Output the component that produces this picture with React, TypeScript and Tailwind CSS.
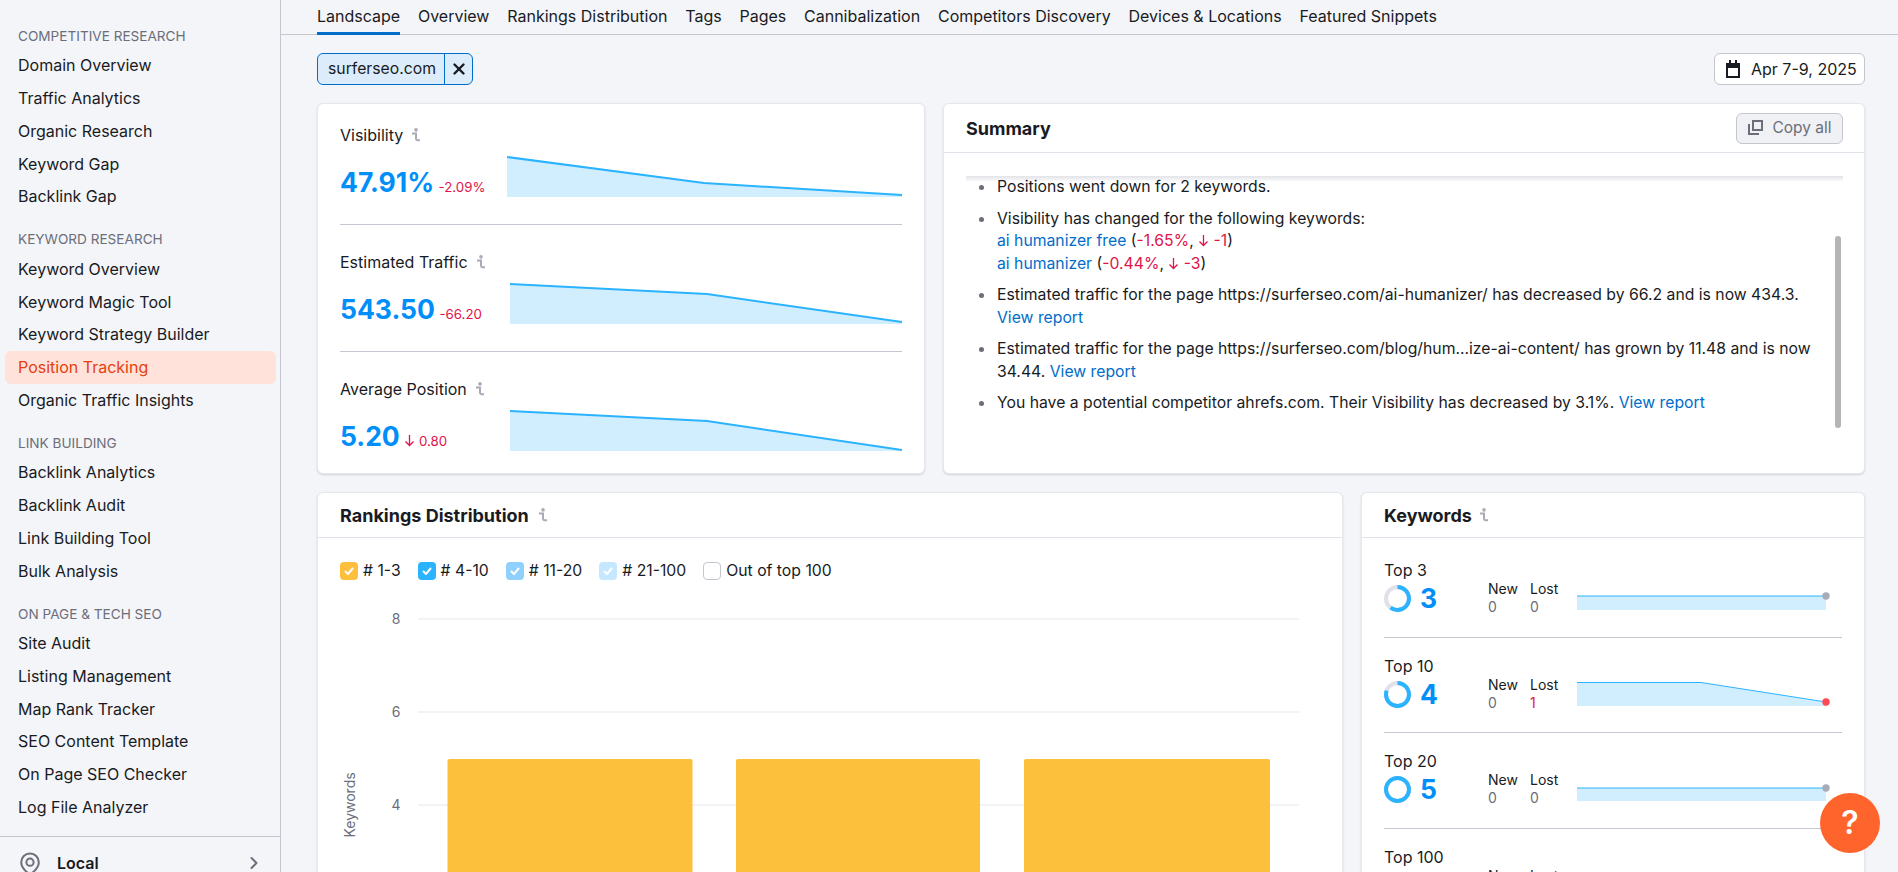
import { ChevronRight, X } from "lucide-react";

const sections = [
  {
    title: "COMPETITIVE RESEARCH",
    items: ["Domain Overview", "Traffic Analytics", "Organic Research", "Keyword Gap", "Backlink Gap"],
  },
  {
    title: "KEYWORD RESEARCH",
    items: ["Keyword Overview", "Keyword Magic Tool", "Keyword Strategy Builder", "Position Tracking", "Organic Traffic Insights"],
  },
  {
    title: "LINK BUILDING",
    items: ["Backlink Analytics", "Backlink Audit", "Link Building Tool", "Bulk Analysis"],
  },
  {
    title: "ON PAGE & TECH SEO",
    items: ["Site Audit", "Listing Management", "Map Rank Tracker", "SEO Content Template", "On Page SEO Checker", "Log File Analyzer"],
  },
];

const tabs = ["Landscape", "Overview", "Rankings Distribution", "Tags", "Pages", "Cannibalization", "Competitors Discovery", "Devices & Locations", "Featured Snippets"];

const legend = [
  { label: "# 1-3", color: "bg-[#fdbf3c]", check: true },
  { label: "# 4-10", color: "bg-[#2bb3ff]", check: true },
  { label: "# 11-20", color: "bg-[#8fd0ff]", check: true },
  { label: "# 21-100", color: "bg-[#c5e7ff]", check: true },
  { label: "Out of top 100", color: "bg-white border border-[#c4c7cf]", check: false },
];

function InfoIcon() {
  return (
    <svg width="9" height="14" viewBox="0 0 9 14" className="shrink-0 text-[#a9abb6]">
      <circle cx="5" cy="1.9" r="1.8" fill="currentColor" />
      <path d="M1 5.6h4v5.2c0 .9.5 1.4 1.4 1.4H9" fill="none" stroke="currentColor" strokeWidth="2" />
    </svg>
  );
}

function Sparkline({ w, mid, end }: { w: number; mid: number; end: number }) {
  const midX = 197;
  return (
    <svg width={w} height="41" viewBox={`0 0 ${w} 41`} className="block shrink-0">
      <path d={`M0 1 L${midX} ${mid} L${w} ${end} L${w} 41 L0 41 Z`} fill="#d1eeff" />
      <path d={`M0 1 L${midX} ${mid} L${w} ${end}`} fill="none" stroke="#2bb3ff" strokeWidth="2" />
    </svg>
  );
}

function Metric({ label, value, delta, chartW, mid, end }: { label: string; value: string; delta: React.ReactNode; chartW: number; mid: number; end: number }) {
  return (
    <div className="pt-[26px] pb-[27px] border-b border-[#c4c7cf] first:pt-[20px] last:border-b-0">
      <div className="flex h-[22px] items-center gap-[8px] text-[16px] text-[#191b23]">
        {label}
        <InfoIcon />
      </div>
      <div className="mt-[10px] flex items-end justify-between">
        <div className="-mb-px flex items-baseline gap-[4.5px]">
          <span className="text-[26.5px] leading-[32px] font-bold text-[#008ff8]">{value}</span>
          <span className="text-[13.3px] text-[#e0134b]">{delta}</span>
        </div>
        <Sparkline w={chartW} mid={mid} end={end} />
      </div>
    </div>
  );
}

function Donut({ pct }: { pct: number }) {
  const c = 2 * Math.PI * 11.5;
  return (
    <svg width="27" height="27" viewBox="0 0 27 27" className="block">
      <circle cx="13.5" cy="13.5" r="11.5" fill="none" stroke="#e0e1e9" strokeWidth="4" />
      <circle
        cx="13.5"
        cy="13.5"
        r="11.5"
        fill="none"
        stroke="#2bb3ff"
        strokeWidth="4"
        strokeDasharray={`${c * pct} ${c}`}
        transform="rotate(-90 13.5 13.5)"
      />
    </svg>
  );
}

function KeywordChart({ line, mid, end, dot }: { line: number; mid?: boolean; end: number; dot: string }) {
  const path = mid ? `M0 ${line} L124 ${line} L249 ${end}` : `M0 ${line} L249 ${end}`;
  return (
    <svg width="256" height="32" viewBox="0 0 256 32" className="block">
      <path d={`${path} L249 30 L0 30 Z`} fill="#d1eeff" />
      <path d={path} fill="none" stroke="#2bb3ff" strokeWidth="1" />
      <circle cx="249" cy={end} r="3.7" fill={dot} />
    </svg>
  );
}

function KeywordRow({ label, value, pct, lost, line, mid, end, dot }: { label: string; value: string; pct: number; lost: string; line: number; mid?: boolean; end: number; dot: string }) {
  return (
    <div className="flex border-b border-[#c4c7cf] pt-[17px] pb-[20.5px] first:pt-[21px] last:border-b-0">
      <div className="w-[104px] shrink-0">
        <div className="h-[22px] text-[16px] leading-[22px] text-[#191b23]">{label}</div>
        <div className="mt-[4px] flex h-[27px] items-center gap-[9px]">
          <Donut pct={pct} />
          <span className="text-[26.5px] leading-[27px] font-bold text-[#008ff8]">{value}</span>
        </div>
      </div>
      <div className="mt-[21px] w-[42px] shrink-0 text-[14px] leading-[18px]">
        <div className="text-[#191b23]">New</div>
        <div className="text-[#6c6e79]">0</div>
      </div>
      <div className="mt-[21px] w-[47px] shrink-0 text-[14px] leading-[18px]">
        <div className="text-[#191b23]">Lost</div>
        <div className={lost === "0" ? "text-[#6c6e79]" : "text-[#e0134b]"}>{lost}</div>
      </div>
      <div className="mt-[21px]">
        <KeywordChart line={line} mid={mid} end={end} dot={dot} />
      </div>
    </div>
  );
}

function Card({ className, children }: { className?: string; children: React.ReactNode }) {
  return <div className={`rounded-[6px] border border-[#e6e7ed] bg-white shadow-[0_1px_2px_rgba(25,27,35,0.15)] ${className}`}>{children}</div>;
}

function Arrow() {
  return (
    <svg width="11" height="13" viewBox="0 0 11 13" className="inline-block align-[-1px]">
      <path d="M5.5 1v10.5M1.5 7.5l4 4 4-4" fill="none" stroke="#e0134b" strokeWidth="1.3" />
    </svg>
  );
}

function SummaryItem({ children }: { children: React.ReactNode }) {
  return (
    <li className="flex pl-[13px] mb-[9.3px]">
      <span className="mt-[9px] mr-[13px] h-[5px] w-[5px] shrink-0 rounded-full bg-[#6c6e79]" />
      <div className="w-[823px]">{children}</div>
    </li>
  );
}

function Link({ children }: { children: React.ReactNode }) {
  return <span className="text-[#006dca]">{children}</span>;
}

function Red({ children }: { children: React.ReactNode }) {
  return <span className="text-[#e0134b]">{children}</span>;
}

export default function App() {
  return (
    <div className="relative flex h-[872px] w-[1898px] overflow-hidden bg-[#f4f5f9] font-['Inter',sans-serif] text-[#191b23]">
      {/* Sidebar */}
      <aside className="flex w-[281px] shrink-0 flex-col border-r border-[#c4c7cf] pt-[23px]">
        {sections.map((s) => (
          <div key={s.title} className="mb-[13.75px] shrink-0">
            <div className="flex h-[26px] items-center pl-[18px] text-[13.6px] text-[#6c6e79]">{s.title}</div>
            {s.items.map((item) => (
              <div
                key={item}
                className={`ml-[5px] mr-[4px] flex h-[32.75px] items-center rounded-[6px] pl-[13px] text-[16px] ${
                  item === "Position Tracking" ? "bg-[#ffe2d9] text-[#e5400e]" : "text-[#191b23]"
                }`}
              >
                {item}
              </div>
            ))}
          </div>
        ))}
        <div className="-mt-px flex h-[52px] shrink-0 items-center border-t border-[#c4c7cf] pl-[20px] pr-[16px]">
          <svg width="20" height="24" viewBox="0 0 20 24" className="mt-[3px] mr-[17px]">
            <path d="M10 22.5C5 19 1.2 15.2 1.2 10.2a8.8 8.8 0 0 1 17.6 0c0 5-3.8 8.8-8.8 12.3Z" fill="none" stroke="#6c6e79" strokeWidth="2" />
            <circle cx="10" cy="10.2" r="3.6" fill="none" stroke="#6c6e79" strokeWidth="2" />
          </svg>
          <span className="flex-1 text-[16px] font-semibold">Local</span>
          <ChevronRight size={20} strokeWidth={2.4} className="text-[#6c6e79]" />
        </div>
      </aside>

      {/* Main */}
      <main className="min-w-0 flex-1">
        <nav className="flex h-[35px] gap-[17.8px] border-b border-[#c4c7cf] pl-[36px]">
          {tabs.map((t, i) => (
            <div key={t} className={`flex h-[35px] items-center pb-[3px] text-[16px] ${i === 0 ? "border-b-[3px] border-[#006dca] pt-[3px]" : ""}`}>
              {t}
            </div>
          ))}
        </nav>

        <div className="pl-[36px] pr-[33px]">
          <div className="mt-[18px] flex h-[32px] items-center justify-between">
            <div className="flex h-[32px] items-center rounded-[6px] border border-[#006dca] bg-[#dcecfb] text-[15.75px]">
              <span className="flex h-full w-[127px] items-center border-r border-[#006dca] pl-[10px]">surferseo.com</span>
              <span className="flex w-[27px] items-center justify-center">
                <X size={18} strokeWidth={3.2} />
              </span>
            </div>
            <div className="flex h-[32px] w-[151px] items-center gap-[10px] rounded-[6px] border border-[#c4c7cf] bg-white pl-[10px] text-[16px]">
              <svg width="16" height="18" viewBox="0 0 16 18">
                <path d="M4 0h2v3h4V0h2v3h3v15H1V3h3V0Zm-1 8v8h10V8H3Z" fill="#191b23" />
              </svg>
              Apr 7-9, 2025
            </div>
          </div>

          <div className="mt-[18px] flex gap-[18px]">
            <Card className="h-[371px] w-[608px] px-[22px]">
              <Metric label="Visibility" value="47.91%" delta="-2.09%" chartW={395} mid={27} end={39} />
              <Metric label="Estimated Traffic" value="543.50" delta="-66.20" chartW={392} mid={11} end={39} />
              <Metric
                label="Average Position"
                value="5.20"
                delta={
                  <>
                    <Arrow /> 0.80
                  </>
                }
                chartW={392}
                mid={11}
                end={40}
              />
            </Card>

            <Card className="relative h-[371px] w-[922px]">
              <div className="flex h-[49px] items-center justify-between border-b border-[#e0e1e9] pl-[22px] pr-[21px]">
                <span className="text-[18px] font-bold">Summary</span>
                <div className="flex h-[31px] w-[107px] items-center justify-center gap-[8px] rounded-[6px] border border-[#c4c7cf] bg-[#f0f1f5] pb-px text-[15.5px] text-[#6c6e79]">
                  <svg width="17" height="17" viewBox="0 0 17 17">
                    <path d="M5 1h11v11H5V1Zm2 2v7h7V3H7ZM1 5h2v9h9v2H1V5Z" fill="#6c6e79" />
                  </svg>
                  Copy all
                </div>
              </div>
              <div className="absolute left-[22px] right-[21px] top-[72px] h-[6px] bg-gradient-to-b from-[#e2e3e8] to-white" />
              <ul className="relative pl-[22px] pt-[23px] text-[15.75px] leading-[22.4px]">
                <SummaryItem>Positions went down for 2 keywords.</SummaryItem>
                <SummaryItem>
                  Visibility has changed for the following keywords:
                  <br />
                  <Link>ai humanizer free</Link> (<Red>-1.65%</Red>, <Arrow /> <Red>-1</Red>)
                  <br />
                  <Link>ai humanizer</Link> (<Red>-0.44%</Red>, <Arrow /> <Red>-3</Red>)
                </SummaryItem>
                <SummaryItem>
                  Estimated traffic for the page https://surferseo.com/ai-humanizer/ has decreased by 66.2 and is now 434.3. <Link>View report</Link>
                </SummaryItem>
                <SummaryItem>
                  Estimated traffic for the page https://surferseo.com/blog/hum...ize-ai-content/ has grown by 11.48 and is now 34.44. <Link>View report</Link>
                </SummaryItem>
                <SummaryItem>
                  You have a potential competitor ahrefs.com. Their Visibility has decreased by 3.1%. <Link>View report</Link>
                </SummaryItem>
              </ul>
              <div className="absolute right-[23px] top-[132px] h-[192px] w-[6px] rounded-full bg-[#b5b5b5]" />
            </Card>
          </div>

          <div className="mt-[18px] flex items-start gap-[18px]">
            <Card className="h-[500px] w-[1026px]">
              <div className="flex h-[45px] items-center gap-[9px] border-b border-[#e0e1e9] pl-[22px] text-[18px] font-bold">
                Rankings Distribution
                <InfoIcon />
              </div>
              <div className="mt-[24px] flex h-[18px] items-center gap-[17px] pl-[22px] text-[15.75px]">
                {legend.map((l) => (
                  <div key={l.label} className="flex items-center gap-[5px]">
                    <span className={`flex h-[18px] w-[18px] items-center justify-center rounded-[4px] ${l.color}`}>
                      {l.check && (
                        <svg width="10" height="8" viewBox="0 0 10 8">
                          <path d="M1 4l3 3 5-6" fill="none" stroke="#fff" strokeWidth="2" />
                        </svg>
                      )}
                    </span>
                    {l.label}
                  </div>
                ))}
              </div>
              <svg width="1024" height="290" viewBox="0 0 1024 290" className="mt-[10px] block">
                {[29, 122, 215].map((y) => (
                  <line key={y} x1="100" x2="981" y1={y} y2={y} stroke="#e6e7ed" strokeWidth="1" />
                ))}
                {[["8", 29], ["6", 122], ["4", 215]].map(([t, y]) => (
                  <text key={t} x="78" y={Number(y) + 5} textAnchor="middle" fontSize="14" fill="#6c6e79">
                    {t}
                  </text>
                ))}
                <text textAnchor="middle" fontSize="14" fill="#6c6e79" transform="translate(37 215) rotate(-90)">
                  Keywords
                </text>
                <rect x="129.5" y="169" width="245" height="130" rx="2" fill="#fdc03c" />
                <rect x="418" y="169" width="244" height="130" rx="2" fill="#fdc03c" />
                <rect x="706" y="169" width="246" height="130" rx="2" fill="#fdc03c" />
              </svg>
            </Card>

            <Card className="h-[500px] w-[504px]">
              <div className="flex h-[45px] items-center gap-[7px] border-b border-[#e0e1e9] pl-[22px] text-[18px] font-bold">
                Keywords
                <InfoIcon />
              </div>
              <div className="px-[22px]">
                <KeywordRow label="Top 3" value="3" pct={0.6} lost="0" line={16} end={16} dot="#a9abb6" />
                <KeywordRow label="Top 10" value="4" pct={0.8} lost="1" line={6.5} mid end={26} dot="#ff4953" />
                <KeywordRow label="Top 20" value="5" pct={1} lost="0" line={17} end={17} dot="#a9abb6" />
                <KeywordRow label="Top 100" value="5" pct={1} lost="0" line={17} end={17} dot="#a9abb6" />
              </div>
            </Card>
          </div>
        </div>
      </main>

      <div className="absolute bottom-[19px] right-[18px] flex h-[60px] w-[60px] items-center justify-center rounded-full bg-[#ff642d] text-[32px] font-semibold text-white">
        ?
      </div>
    </div>
  );
}
